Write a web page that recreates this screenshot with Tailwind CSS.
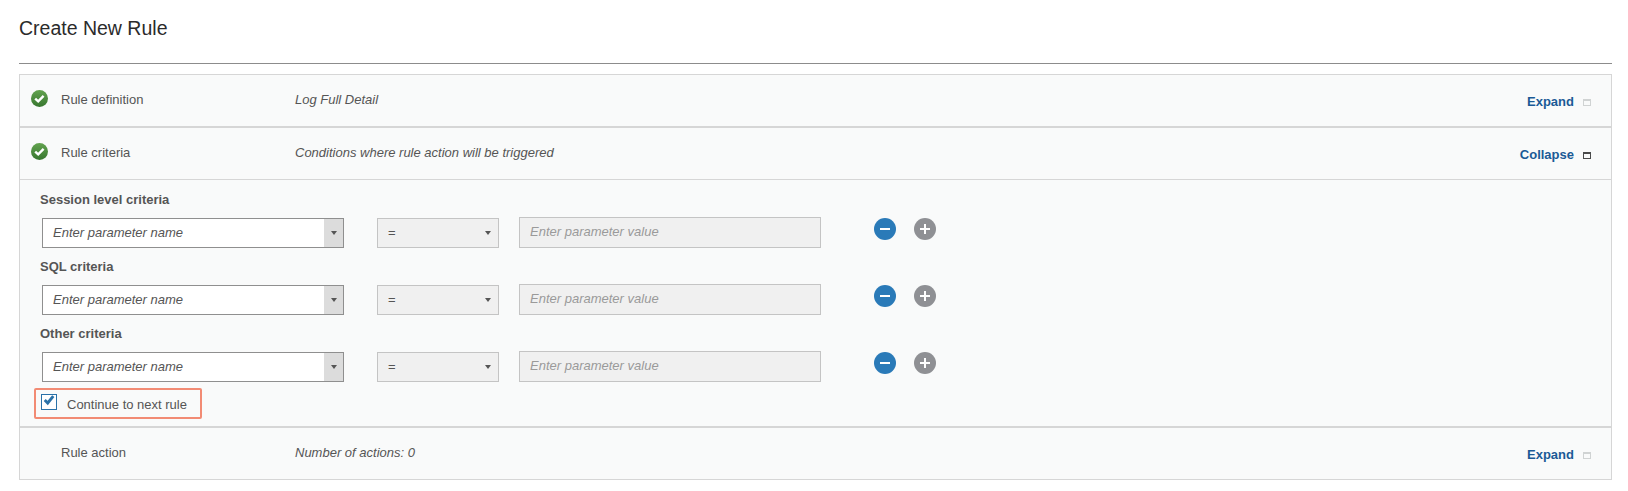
<!DOCTYPE html>
<html>
<head>
    <meta charset="UTF-8">
    <title>Create New Rule</title>
    <script src="https://cdn.jsdelivr.net/npm/@tailwindcss/browser@4"></script>
</head>
<body class="bg-white font-['Liberation_Sans',Arial,sans-serif] text-[13px] text-[#555555]">
    <svg class="absolute h-0 w-0">
        <defs>
            <linearGradient id="okFill" x1="0" y1="0" x2="0" y2="1"><stop offset="0" stop-color="#63a34f"/><stop offset="1" stop-color="#37762f"/></linearGradient>
        </defs>
    </svg>
    <div class="pl-[19px] pr-[16px]">
        <header class="h-[64px] border-b border-[#8c8c8c]">
            <h1 class="pt-[16px] text-[19.5px] leading-[24px] text-[#2b2b2b]">Create New Rule</h1>
        </header>

        <div class="mt-[10px] border border-[#d6d6d6] bg-[#f9fafa]">
            <!-- Rule definition -->
            <div class="flex h-[53px] items-start border-b-2 border-[#d6d6d6]">
                <svg class="ml-[11px] mt-[15px] h-[17px] w-[17px]" viewBox="0 0 17 17"><circle cx="8.5" cy="8.5" r="8.5" fill="url(#okFill)"/><path d="M4.2 8.6l3 2.8 5.4-5.6" fill="none" stroke="#fff" stroke-width="2.4"/></svg>
                <span class="ml-[13px] mt-[17px] w-[234px] leading-[16px]">Rule definition</span>
                <span class="mt-[17px] leading-[16px] italic">Log Full Detail</span>
                <div class="ml-auto mr-[20px] mt-[19px] flex items-center">
                    <a href="#" class="font-bold leading-[16px] text-[#1b5a96]">Expand</a>
                    <span class="ml-[9px] h-[7px] w-[8px] border border-t-2 border-[#d0d3d3]"></span>
                </div>
            </div>

            <!-- Rule criteria -->
            <div class="flex h-[52px] items-start border-b border-[#d6d6d6]">
                <svg class="ml-[11px] mt-[15px] h-[17px] w-[17px]" viewBox="0 0 17 17"><circle cx="8.5" cy="8.5" r="8.5" fill="url(#okFill)"/><path d="M4.2 8.6l3 2.8 5.4-5.6" fill="none" stroke="#fff" stroke-width="2.4"/></svg>
                <span class="ml-[13px] mt-[17px] w-[234px] leading-[16px]">Rule criteria</span>
                <span class="mt-[17px] leading-[16px] italic">Conditions where rule action will be triggered</span>
                <div class="ml-auto mr-[20px] mt-[19px] flex items-center">
                    <a href="#" class="font-bold leading-[16px] text-[#1b5a96]">Collapse</a>
                    <span class="ml-[9px] h-[7px] w-[8px] border border-t-2 border-[#4a4a4a]"></span>
                </div>
            </div>

            <div class="border-b-2 border-[#d6d6d6] pt-[10px] pb-[7px]">
                <!-- Session level -->
                <div class="ml-[20px] font-bold leading-[20px]">Session level criteria</div>
                <div class="ml-[22px] mt-[8px] mb-[7px] flex h-[30px] items-start">
                    <div class="flex h-[30px] w-[302px] border border-[#8f8f8f] bg-white">
                        <input class="min-w-0 flex-1 pl-[10px] text-[13px] italic outline-none placeholder:text-[#555555]" placeholder="Enter parameter name">
                        <span class="flex w-[19px] items-center justify-center bg-[#dcdcdc]"><span class="border-x-[3.5px] border-t-[4px] border-x-transparent border-t-[#555555]"></span></span>
                    </div>
                    <div class="ml-[33px] flex h-[30px] w-[122px] items-center justify-between border border-[#c4c4c4] bg-[#f0f0f0] pl-[10px] pr-[7px]"><span>=</span><span class="border-x-[3.5px] border-t-[4px] border-x-transparent border-t-[#555555]"></span></div>
                    <input class="ml-[20px] -mt-px h-[31px] w-[302px] border border-[#c4c4c4] bg-[#f0f0f0] pl-[10px] pb-[2px] text-[13px] italic outline-none placeholder:text-[#9a9a9a]" placeholder="Enter parameter value">
                    <svg class="ml-[53px] h-[22px] w-[22px]" viewBox="0 0 22 22"><circle cx="11" cy="11" r="11" fill="#2a7ab8"/><path d="M6 11h10" stroke="#fff" stroke-width="2"/></svg>
                    <svg class="ml-[18px] h-[22px] w-[22px]" viewBox="0 0 22 22"><circle cx="11" cy="11" r="11" fill="#8f9094"/><path d="M6 11h10M11 6v10" stroke="#fff" stroke-width="2"/></svg>
                </div>

                <!-- SQL -->
                <div class="ml-[20px] font-bold leading-[20px] pt-[2px]">SQL criteria</div>
                <div class="ml-[22px] mt-[8px] mb-[7px] flex h-[30px] items-start">
                    <div class="flex h-[30px] w-[302px] border border-[#8f8f8f] bg-white">
                        <input class="min-w-0 flex-1 pl-[10px] text-[13px] italic outline-none placeholder:text-[#555555]" placeholder="Enter parameter name">
                        <span class="flex w-[19px] items-center justify-center bg-[#dcdcdc]"><span class="border-x-[3.5px] border-t-[4px] border-x-transparent border-t-[#555555]"></span></span>
                    </div>
                    <div class="ml-[33px] flex h-[30px] w-[122px] items-center justify-between border border-[#c4c4c4] bg-[#f0f0f0] pl-[10px] pr-[7px]"><span>=</span><span class="border-x-[3.5px] border-t-[4px] border-x-transparent border-t-[#555555]"></span></div>
                    <input class="ml-[20px] -mt-px h-[31px] w-[302px] border border-[#c4c4c4] bg-[#f0f0f0] pl-[10px] pb-[2px] text-[13px] italic outline-none placeholder:text-[#9a9a9a]" placeholder="Enter parameter value">
                    <svg class="ml-[53px] h-[22px] w-[22px]" viewBox="0 0 22 22"><circle cx="11" cy="11" r="11" fill="#2a7ab8"/><path d="M6 11h10" stroke="#fff" stroke-width="2"/></svg>
                    <svg class="ml-[18px] h-[22px] w-[22px]" viewBox="0 0 22 22"><circle cx="11" cy="11" r="11" fill="#8f9094"/><path d="M6 11h10M11 6v10" stroke="#fff" stroke-width="2"/></svg>
                </div>

                <!-- Other -->
                <div class="ml-[20px] font-bold leading-[20px] pt-[2px]">Other criteria</div>
                <div class="ml-[22px] mt-[8px] flex h-[30px] items-start">
                    <div class="flex h-[30px] w-[302px] border border-[#8f8f8f] bg-white">
                        <input class="min-w-0 flex-1 pl-[10px] text-[13px] italic outline-none placeholder:text-[#555555]" placeholder="Enter parameter name">
                        <span class="flex w-[19px] items-center justify-center bg-[#dcdcdc]"><span class="border-x-[3.5px] border-t-[4px] border-x-transparent border-t-[#555555]"></span></span>
                    </div>
                    <div class="ml-[33px] flex h-[30px] w-[122px] items-center justify-between border border-[#c4c4c4] bg-[#f0f0f0] pl-[10px] pr-[7px]"><span>=</span><span class="border-x-[3.5px] border-t-[4px] border-x-transparent border-t-[#555555]"></span></div>
                    <input class="ml-[20px] -mt-px h-[31px] w-[302px] border border-[#c4c4c4] bg-[#f0f0f0] pl-[10px] pb-[2px] text-[13px] italic outline-none placeholder:text-[#9a9a9a]" placeholder="Enter parameter value">
                    <svg class="ml-[53px] h-[22px] w-[22px]" viewBox="0 0 22 22"><circle cx="11" cy="11" r="11" fill="#2a7ab8"/><path d="M6 11h10" stroke="#fff" stroke-width="2"/></svg>
                    <svg class="ml-[18px] h-[22px] w-[22px]" viewBox="0 0 22 22"><circle cx="11" cy="11" r="11" fill="#8f9094"/><path d="M6 11h10M11 6v10" stroke="#fff" stroke-width="2"/></svg>
                </div>

                <!-- Continue checkbox -->
                <label class="ml-[14px] mt-[6px] flex h-[31px] w-[168px] items-start rounded-[2px] border-2 border-[#f28b74] pl-[5px]">
                    <span class="mt-[4px] flex h-[16px] w-[16px] items-center justify-center border border-[#2a71a8] bg-white">
                        <svg class="h-[12px] w-[12px] -translate-y-[2px]" viewBox="0 0 14 14"><path d="M2 7l3.5 3.5L12 2.5" fill="none" stroke="#2a71a8" stroke-width="3.4"/></svg>
                    </span>
                    <span class="ml-[10px] mt-[7px] leading-[16px]">Continue to next rule</span>
                </label>
            </div>

            <!-- Rule action -->
            <div class="flex h-[51px] items-start">
                <span class="ml-[41px] mt-[17px] w-[234px] leading-[16px]">Rule action</span>
                <span class="mt-[17px] leading-[16px] italic">Number of actions: 0</span>
                <div class="ml-auto mr-[20px] mt-[19px] flex items-center">
                    <a href="#" class="font-bold leading-[16px] text-[#1b5a96]">Expand</a>
                    <span class="ml-[9px] h-[7px] w-[8px] border border-t-2 border-[#d0d3d3]"></span>
                </div>
            </div>
        </div>
    </div>
</body>
</html>
